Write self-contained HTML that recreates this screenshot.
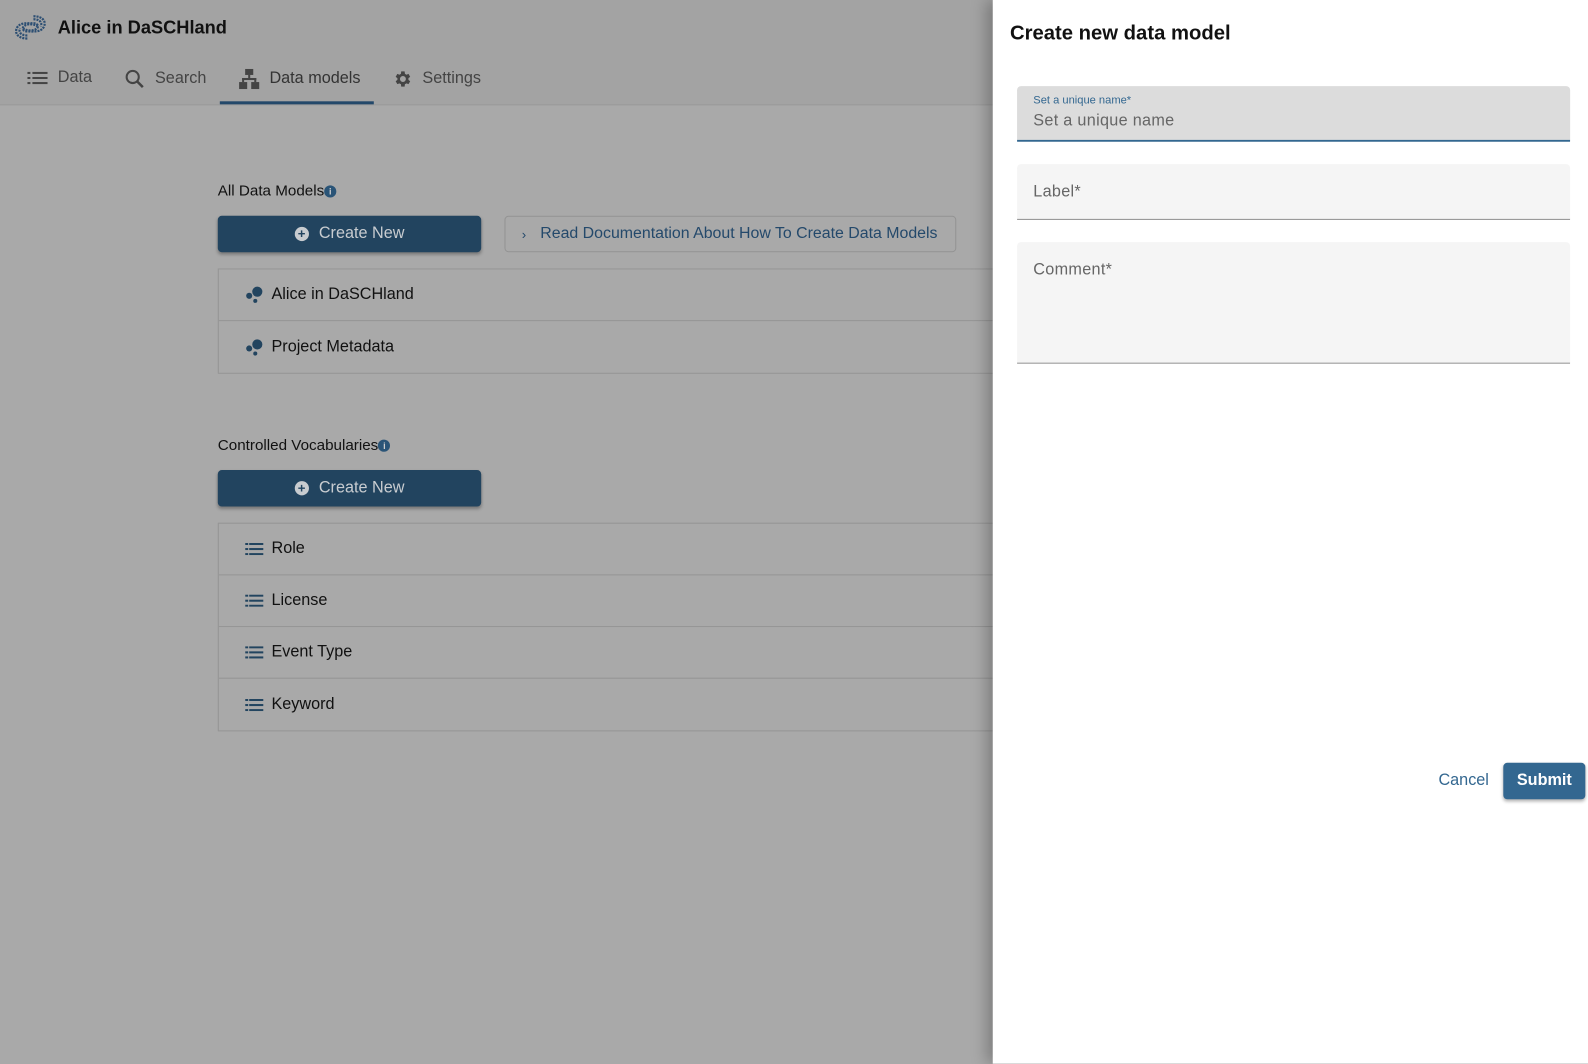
<!DOCTYPE html>
<html><head><style>
*{box-sizing:border-box;margin:0;padding:0}
body{width:1588px;height:1050px;overflow:hidden;font-family:"Liberation Sans",Roboto,sans-serif;background:#a9a9a9;position:relative;color:#111}
#w{position:absolute;left:0;top:0;width:1588px;height:1050px;transform:scale(1.013);transform-origin:0 0}
.top{position:absolute;left:0;top:0;width:1588px;height:104px;background:#a3a3a3;border-bottom:1px solid #9a9a9a}
.title{position:absolute;left:57px;top:17px;font-size:18px;font-weight:bold;color:#111}
.tab{position:absolute;top:68px;font-size:16px;color:#444;display:flex;align-items:center;gap:10px}
.ul{position:absolute;left:217px;top:100px;width:152px;height:3px;background:#23486a}
.h{position:absolute;left:215px;font-size:15px;color:#111}
.info{display:inline-block;width:12px;height:12px;border-radius:50%;background:#2a5477;color:#ccc;font-size:9px;text-align:center;line-height:12px;font-weight:bold;vertical-align:1px}
.btn{position:absolute;left:215px;width:260px;height:36px;background:#22445f;border-radius:4px;color:#c8ccd0;font-size:16px;display:flex;align-items:center;justify-content:center;gap:10px;box-shadow:0 2px 3px rgba(0,0,0,.3)}
.plus{width:14px;height:14px;border-radius:50%;background:#c8ccd0;color:#22445f;font-size:13px;line-height:14px;text-align:center;font-weight:bold}
.doc{position:absolute;left:498px;top:213px;width:446px;height:36px;border:1px solid #939393;border-radius:4px;color:#24496b;font-size:15.7px;display:flex;align-items:center;padding-left:16px;gap:14px}
.list{position:absolute;left:215px;width:800px;border:1px solid #959595}
.row{height:51px;border-bottom:1px solid #959595;display:flex;align-items:center;padding-left:26px;gap:8px;font-size:16px;color:#111}
.row:last-child{border-bottom:none}
.panel{position:absolute;left:980px;top:0;width:620px;height:1050px;background:#fff;box-shadow:-6px 0 14px rgba(0,0,0,.25)}
.pt{position:absolute;left:17px;top:22px;font-size:20px;font-weight:bold;color:#111}
.f{position:absolute;left:24px;width:546px;background:#f5f5f5;border-bottom:1px solid #777;border-radius:4px 4px 0 0}
.ph{position:absolute;left:16px;font-size:16px;color:#666;letter-spacing:.3px}
</style></head><body><div id="w">
<div class="top">
<svg style="position:absolute;left:13px;top:13px" width="34" height="28" viewBox="0 0 34 28"><g fill="none" stroke="#2d4f73" stroke-width="2.2" stroke-dasharray="2 1"><path d="M20 3 C30 3 33 9 30 14 C27 19 20 18 14 18 C9 18 8 14 12 12 C15 10 22 11 24 13"/><path d="M14 25 C4 25 1 19 4 14 C7 9 14 10 20 10 C25 10 26 14 22 16 C19 18 12 17 10 15"/><path d="M20 6 C27 6 29 10 27 13"/><path d="M14 22 C7 22 5 18 7 15"/></g></svg>
<div class="title">Alice in DaSCHland</div>
<div class="tab" style="left:27px"><svg width="20" height="14"><g fill="#444"><rect x="0" y="1" width="3" height="2"/><rect x="5" y="1" width="15" height="2"/><rect x="0" y="6" width="3" height="2"/><rect x="5" y="6" width="15" height="2"/><rect x="0" y="11" width="3" height="2"/><rect x="5" y="11" width="15" height="2"/></g></svg>Data</div>
<div class="tab" style="left:123px"><svg width="20" height="20"><circle cx="8" cy="8" r="6" fill="none" stroke="#444" stroke-width="2"/><path d="M12 12 L18 18" stroke="#444" stroke-width="2.5"/></svg>Search</div>
<div class="tab" style="left:236px;color:#333"><svg width="20" height="20"><g fill="#444"><rect x="6" y="0" width="8" height="6"/><rect x="9" y="6" width="2" height="4"/><rect x="3" y="9" width="14" height="2"/><rect x="3" y="9" width="2" height="4"/><rect x="15" y="9" width="2" height="4"/><rect x="0" y="13" width="8" height="7"/><rect x="12" y="13" width="8" height="7"/></g></svg>Data models</div>
<div class="tab" style="left:387px"><svg width="20" height="20" viewBox="0 0 24 24"><path fill="#444" d="M19.4 13a7.5 7.5 0 000-2l2.1-1.6-2-3.5-2.5 1a7 7 0 00-1.7-1L14.9 3h-4l-.4 2.9a7 7 0 00-1.7 1l-2.5-1-2 3.5L6.4 11a7.5 7.5 0 000 2l-2.1 1.6 2 3.5 2.5-1a7 7 0 001.7 1l.4 2.9h4l.4-2.9a7 7 0 001.7-1l2.5 1 2-3.5zM12.9 15.5a3.5 3.5 0 110-7 3.5 3.5 0 010 7z"/></svg>Settings</div>
<div class="ul"></div>
</div>

<div class="h" style="top:180px">All Data Models<span class="info">i</span></div>
<div class="btn" style="top:213px"><span class="plus">+</span>Create New</div>
<div class="doc"><span style="font-size:13px">›</span>Read Documentation About How To Create Data Models</div>
<div class="list" style="top:265px">
<div class="row"><svg width="18" height="18"><circle cx="12" cy="6" r="5" fill="#22445f"/><circle cx="4" cy="10" r="3" fill="#22445f"/><circle cx="10" cy="15" r="2" fill="#22445f"/></svg>Alice in DaSCHland</div>
<div class="row"><svg width="18" height="18"><circle cx="12" cy="6" r="5" fill="#22445f"/><circle cx="4" cy="10" r="3" fill="#22445f"/><circle cx="10" cy="15" r="2" fill="#22445f"/></svg>Project Metadata</div>
</div>

<div class="h" style="top:431px">Controlled Vocabularies<span class="info">i</span></div>
<div class="btn" style="top:464px"><span class="plus">+</span>Create New</div>
<div class="list" style="top:516px">
<div class="row"><svg width="18" height="12"><g fill="#22445f"><rect x="0" y="0" width="3" height="2"/><rect x="4" y="0" width="14" height="2"/><rect x="0" y="5" width="3" height="2"/><rect x="4" y="5" width="14" height="2"/><rect x="0" y="10" width="3" height="2"/><rect x="4" y="10" width="14" height="2"/></g></svg>Role</div>
<div class="row"><svg width="18" height="12"><g fill="#22445f"><rect x="0" y="0" width="3" height="2"/><rect x="4" y="0" width="14" height="2"/><rect x="0" y="5" width="3" height="2"/><rect x="4" y="5" width="14" height="2"/><rect x="0" y="10" width="3" height="2"/><rect x="4" y="10" width="14" height="2"/></g></svg>License</div>
<div class="row"><svg width="18" height="12"><g fill="#22445f"><rect x="0" y="0" width="3" height="2"/><rect x="4" y="0" width="14" height="2"/><rect x="0" y="5" width="3" height="2"/><rect x="4" y="5" width="14" height="2"/><rect x="0" y="10" width="3" height="2"/><rect x="4" y="10" width="14" height="2"/></g></svg>Event Type</div>
<div class="row"><svg width="18" height="12"><g fill="#22445f"><rect x="0" y="0" width="3" height="2"/><rect x="4" y="0" width="14" height="2"/><rect x="0" y="5" width="3" height="2"/><rect x="4" y="5" width="14" height="2"/><rect x="0" y="10" width="3" height="2"/><rect x="4" y="10" width="14" height="2"/></g></svg>Keyword</div>
</div>

<div class="panel">
<div class="pt">Create new data model</div>
<div class="f" style="top:85px;height:55px;background:#dcdcdc;border-bottom:2px solid #336790">
<div style="position:absolute;left:16px;top:8px;font-size:11px;color:#336790">Set a unique name*</div>
<div class="ph" style="top:26px">Set a unique name</div></div>
<div class="f" style="top:162px;height:55px"><div class="ph" style="top:19px">Label*</div></div>
<div class="f" style="top:239px;height:120px"><div class="ph" style="top:19px">Comment*</div></div>
<div style="position:absolute;left:440px;top:762px;font-size:16px;color:#336790">Cancel</div>
<div style="position:absolute;left:504px;top:753px;width:81px;height:36px;background:#336790;border-radius:4px;color:#fff;font-size:16px;font-weight:bold;text-align:center;line-height:36px;box-shadow:0 2px 3px rgba(0,0,0,.3)">Submit</div>
</div>
</div></body></html>
